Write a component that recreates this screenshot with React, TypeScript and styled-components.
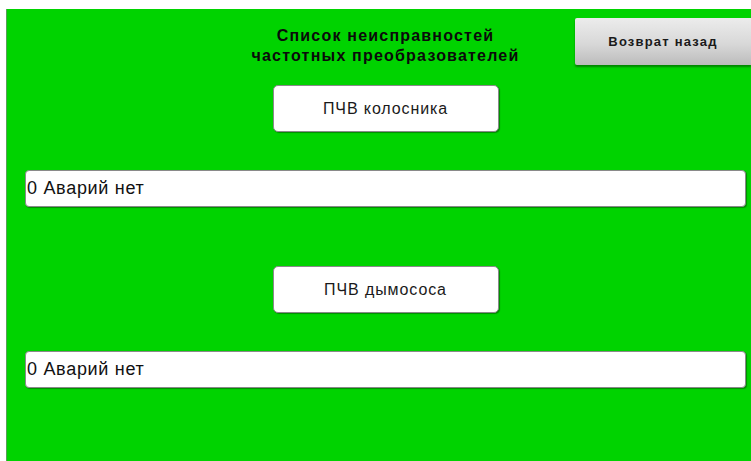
import React from "react";
import styled, {createGlobalStyle} from "styled-components";

const GlobalStyle = createGlobalStyle`
  html, body {
    margin: 0;
    padding: 0;
    background: #ffffff;
  }
  body {
    font-family: "Liberation Sans", Arial, sans-serif;
  }
`;

type Drive = {
    name: string;
    status: string;
};

const drives: Drive[] = [
    {name: "ПЧВ колосника", status: "0 Аварий нет"},
    {name: "ПЧВ дымососа", status: "0 Аварий нет"},
];

const App: React.FC = () => {
    return (
        <>
            <GlobalStyle/>
            <Frame>
                <Panel>
                    <Header>
                        <span/>
                        <Title>
                            Список неисправностей<br/>
                            частотных преобразователей
                        </Title>
                        <BackButton>Возврат назад</BackButton>
                    </Header>
                    {drives.map((drive, i) => (
                        <Section key={drive.name} first={i === 0}>
                            <DriveButton>{drive.name}</DriveButton>
                            <StatusField>{drive.status}</StatusField>
                        </Section>
                    ))}
                </Panel>
            </Frame>
        </>
    );
}

export default App;

const Frame = styled.div`
  width: 751px;
  height: 461px;
  box-sizing: border-box;
  padding: 9px 0 0 6px;
  overflow: hidden;
`;

const Panel = styled.div`
  height: 100%;
  box-sizing: border-box;
  background: #00d300;
  border-left: 1px solid #5a9c5a;
  padding: 9px 5px 0 18px;
  display: flex;
  flex-direction: column;
`;

const Header = styled.div`
  height: 47px;
  display: grid;
  grid-template-columns: 1fr auto 1fr;
  align-items: start;
`;

const Title = styled.div`
  margin-top: 8px;
  font-size: 16px;
  line-height: 20px;
  letter-spacing: 1.2px;
  font-weight: bold;
  color: #0a0a0a;
  text-align: center;
`;

const BackButton = styled.button`
  justify-self: end;
  margin-right: -5px;
  width: 176px;
  height: 47px;
  border: none;
  border-radius: 2px 0 0 2px;
  background: linear-gradient(to bottom, #ececec 0%, #d8d8d8 55%, #bcbcbc 100%);
  box-shadow: 0 2px 2px rgba(0, 70, 0, 0.55);
  font-family: "Liberation Sans", Arial, sans-serif;
  font-size: 13px;
  letter-spacing: 1.2px;
  font-weight: bold;
  color: #1a1a1a;
  padding: 0;
`;

const Section = styled.div<{ first?: boolean }>`
  display: flex;
  flex-direction: column;
  align-items: center;
  margin-top: ${p => p.first ? "20px" : "59px"};
`;

const DriveButton = styled.button`
  width: 226px;
  height: 47px;
  background: #ffffff;
  border: 1px solid #8a8a8a;
  border-radius: 5px;
  box-shadow: 1px 1px 1px rgba(0, 0, 0, 0.35);
  font-family: "Liberation Sans", Arial, sans-serif;
  font-size: 16px;
  letter-spacing: 0.9px;
  color: #1a1a1a;
  padding: 0;
`;

const StatusField = styled.div`
  align-self: stretch;
  margin-top: 38px;
  height: 37px;
  box-sizing: border-box;
  background: #ffffff;
  border: 1px solid #8a8a8a;
  border-radius: 4px;
  box-shadow: 1px 1px 1px rgba(0, 0, 0, 0.35);
  display: flex;
  align-items: center;
  padding-left: 1px;
  font-size: 18px;
  letter-spacing: 0.7px;
  color: #111111;
`;
